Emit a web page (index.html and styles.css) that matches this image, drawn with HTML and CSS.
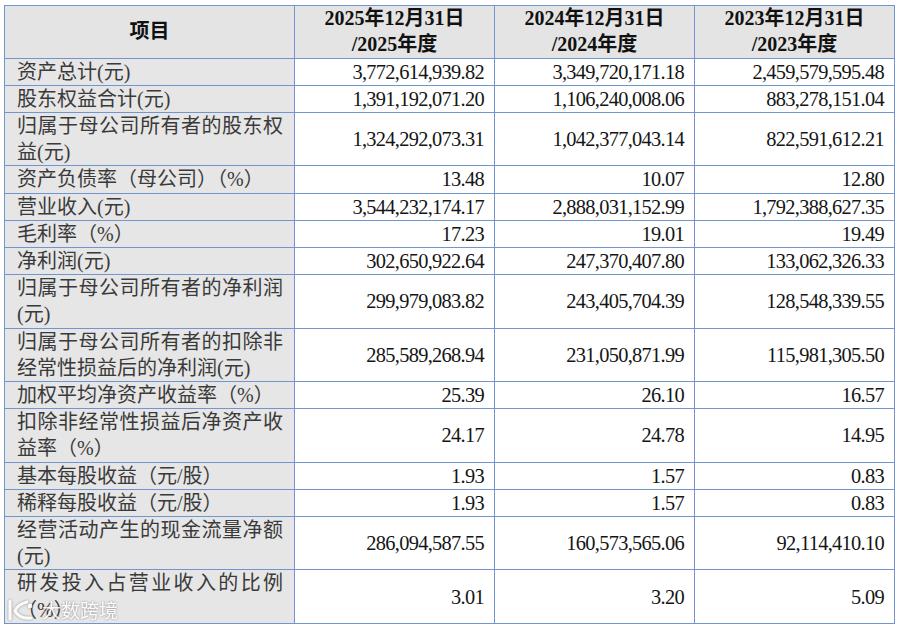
FILE: index.html
```html
<!DOCTYPE html>
<html lang="zh-CN">
<head>
<meta charset="utf-8">
<title>主要财务数据</title>
<link rel="stylesheet" href="styles.css">
</head>
<body>
<div class="wrap">
<table class="fin">
  <colgroup>
    <col class="c-label">
    <col class="c-num">
    <col class="c-num">
    <col class="c-num">
  </colgroup>
  <thead>
    <tr>
      <th class="h-label">项目</th>
      <th>2025年12月31日<br>/2025年度</th>
      <th>2024年12月31日<br>/2024年度</th>
      <th>2023年12月31日<br>/2023年度</th>
    </tr>
  </thead>
  <tbody>
    <tr><td class="lbl">资产总计(元)</td><td>3,772,614,939.82</td><td>3,349,720,171.18</td><td>2,459,579,595.48</td></tr>
    <tr><td class="lbl">股东权益合计(元)</td><td>1,391,192,071.20</td><td>1,106,240,008.06</td><td>883,278,151.04</td></tr>
    <tr><td class="lbl">归属于母公司所有者的股东权益(元)</td><td>1,324,292,073.31</td><td>1,042,377,043.14</td><td>822,591,612.21</td></tr>
    <tr><td class="lbl">资产负债率（母公司）（%）</td><td>13.48</td><td>10.07</td><td>12.80</td></tr>
    <tr><td class="lbl">营业收入(元)</td><td>3,544,232,174.17</td><td>2,888,031,152.99</td><td>1,792,388,627.35</td></tr>
    <tr><td class="lbl">毛利率（%）</td><td>17.23</td><td>19.01</td><td>19.49</td></tr>
    <tr><td class="lbl">净利润(元)</td><td>302,650,922.64</td><td>247,370,407.80</td><td>133,062,326.33</td></tr>
    <tr><td class="lbl">归属于母公司所有者的净利润(元)</td><td>299,979,083.82</td><td>243,405,704.39</td><td>128,548,339.55</td></tr>
    <tr><td class="lbl">归属于母公司所有者的扣除非经常性损益后的净利润(元)</td><td>285,589,268.94</td><td>231,050,871.99</td><td>115,981,305.50</td></tr>
    <tr><td class="lbl">加权平均净资产收益率（%）</td><td>25.39</td><td>26.10</td><td>16.57</td></tr>
    <tr><td class="lbl">扣除非经常性损益后净资产收益率（%）</td><td>24.17</td><td>24.78</td><td>14.95</td></tr>
    <tr><td class="lbl">基本每股收益（元/股）</td><td>1.93</td><td>1.57</td><td>0.83</td></tr>
    <tr><td class="lbl">稀释每股收益（元/股）</td><td>1.93</td><td>1.57</td><td>0.83</td></tr>
    <tr><td class="lbl">经营活动产生的现金流量净额(元)</td><td>286,094,587.55</td><td>160,573,565.06</td><td>92,114,410.10</td></tr>
    <tr><td class="lbl">研发投入占营业收入的比例（%）</td><td>3.01</td><td>3.20</td><td>5.09</td></tr>
  </tbody>
</table>
<div class="watermark">
  <svg class="wm-logo" width="34" height="26" viewBox="0 0 34 26" aria-hidden="true">
    <path d="M5 4 V22" fill="none" stroke="#fff" stroke-width="3.2" stroke-linecap="round"/>
    <path d="M22 5 C14 7 11 11 10 14 C13 19 18 22 26 21" fill="none" stroke="#fff" stroke-width="3.2" stroke-linecap="round"/>
    <circle cx="25" cy="9" r="2.4" fill="#fff"/>
  </svg>
  <span class="wm-text">大数跨境</span>
</div>
</div>
</body>
</html>
```

FILE: styles.css
```css
html, body {
  margin: 0;
  padding: 0;
  background: #ffffff;
}

body {
  padding: 5px 0 0 4px;
}

.wrap {
  position: relative;
  width: 890px;
}

.fin {
  border-collapse: collapse;
  table-layout: fixed;
  width: 891px;
  font-family: "Liberation Serif", "Noto Sans CJK SC", serif;
  font-size: 20px;
  color: #1a1a1a;
}

.c-label { width: 290px; }
.c-num { width: 200px; }

.fin th,
.fin td {
  border: 1px solid #7196cf;
  padding: 0;
}

.fin th {
  background: #e4e4e4;
  font-weight: bold;
  line-height: 25.8px;
  text-align: center;
  color: #111;
}

.fin td {
  line-height: 26.2px;
  text-align: right;
  vertical-align: middle;
  padding-right: 10px;
  font-size: 20.4px;
  letter-spacing: -0.7px;
  color: #151515;
}

.fin td.lbl {
  background: #e6e6e6;
  text-align: justify;
  padding: 0 11px 0 12px;
  font-size: 20px;
  letter-spacing: 0;
  color: #3a3a3a;
}

.watermark {
  position: absolute;
  left: 1px;
  top: 591px;
  display: flex;
  align-items: center;
  gap: 3px;
  opacity: 0.85;
  filter: drop-shadow(0 0 1px rgba(0, 0, 0, 0.45));
}

.wm-text {
  font-family: "Noto Sans CJK SC", sans-serif;
  font-size: 19px;
  color: #ffffff;
}
```
